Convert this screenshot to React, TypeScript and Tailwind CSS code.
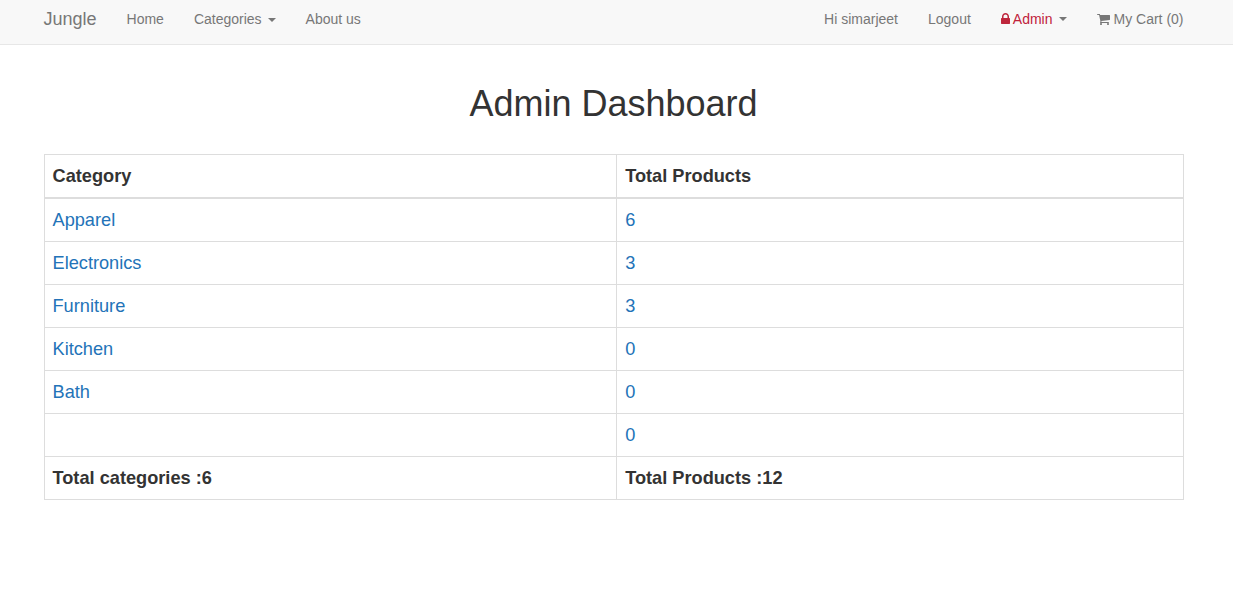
const rows = [
  { name: "Apparel", total: 6 },
  { name: "Electronics", total: 3 },
  { name: "Furniture", total: 3 },
  { name: "Kitchen", total: 0 },
  { name: "Bath", total: 0 },
  { name: "", total: 0 },
];

function Caret() {
  return (
    <span className="ml-1.5 inline-block border-x-4 border-t-4 border-x-transparent border-t-[#777] align-middle" />
  );
}

function LockIcon() {
  return (
    <svg viewBox="320 0 1152 1792" className="mr-[3px] h-3.5 w-[9px]" fill="#be263c">
      <path d="M640 768h512v-192q0-106-75-181t-181-75-181 75-75 181v192zm832 96v576q0 40-28 68t-68 28h-960q-40 0-68-28t-28-68v-576q0-40 28-68t68-28h32v-192q0-184 132-316t316-132 316 132 132 316v192h32q40 0 68 28t28 68z" />
    </svg>
  );
}

function CartIcon() {
  return (
    <svg viewBox="64 0 1664 1792" className="mr-1 h-3.5 w-[13px]" fill="currentColor">
      <path d="M704 1536q0 52-38 90t-90 38-90-38-38-90 38-90 90-38 90 38 38 90zm896 0q0 52-38 90t-90 38-90-38-38-90 38-90 90-38 90 38 38 90zm128-1088v512q0 24-16.500 42.500t-40.500 21.500l-1044 122q13 60 13 70 0 16-24 64h920q26 0 45 19t19 45-19 45-45 19h-1024q-26 0-45-19t-19-45q0-11 8-31.500t16-36 21.500-40 15.500-29.500l-177-823h-204q-26 0-45-19t-19-45 19-45 45-19h256q16 0 28.500 6.500t19.500 15.500 13 24.500 8 26 5.500 29.500 4.500 26h1201q26 0 45 19t19 45z" />
    </svg>
  );
}

function Navbar() {
  return (
    <nav className="h-[45px] border-b border-[#e7e7e7] bg-[#f8f8f8] pr-[49.5px] pl-[43.5px] text-sm leading-5 text-[#777]">
      <div className="flex justify-between pt-[9px]">
        <div className="flex">
          <a className="mr-[30px] text-lg leading-5">Jungle</a>
          <a className="mr-[30px]">Home</a>
          <a className="mr-[30px]">Categories<Caret /></a>
          <a>About us</a>
        </div>
        <div className="flex">
          <a className="mr-[30px]">Hi simarjeet</a>
          <a className="mr-[30px]">Logout</a>
          <a className="mr-[30px] flex items-center text-[#c0223b]">
            <LockIcon />
            Admin<Caret />
          </a>
          <a className="flex items-center">
            <CartIcon />
            My Cart (0)
          </a>
        </div>
      </div>
    </nav>
  );
}

export default function App() {
  return (
    <div className="min-h-[606px] bg-white font-['Liberation_Sans',Arial,sans-serif] text-[#333]">
      <Navbar />
      <main className="pr-[49.5px] pl-[43.5px]">
        <h1 className="pt-[39px] text-center text-4xl leading-10">Admin Dashboard</h1>
        <table className="mt-[30px] w-[1140px] table-fixed border-collapse border border-[#ddd] text-[18.2px] leading-[26px]">
          <colgroup>
            <col className="w-[572.7px]" />
            <col />
          </colgroup>
          <thead>
            <tr className="border-b-2 border-[#ddd] text-left">
              <th className="border-r border-[#ddd] p-2">Category</th>
              <th className="p-2">Total Products</th>
            </tr>
          </thead>
          <tbody>
            {rows.map((row, i) => (
              <tr key={i} className="border-b border-[#ddd] text-[#2373b8]">
                <td className="border-r border-[#ddd] p-2"><a>{row.name}</a></td>
                <td className="p-2"><a>{row.total}</a></td>
              </tr>
            ))}
            <tr className="text-left">
              <th className="border-r border-[#ddd] p-2">Total categories :6</th>
              <th className="p-2">Total Products :12</th>
            </tr>
          </tbody>
        </table>
      </main>
    </div>
  );
}
